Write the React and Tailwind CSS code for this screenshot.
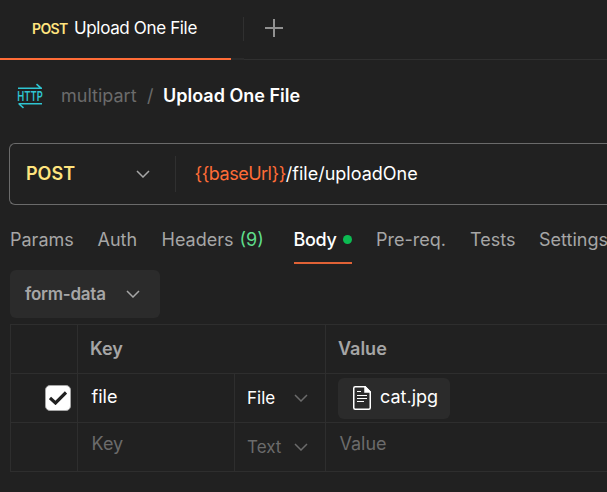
import React from "react";

function Chevron({ className }) {
  return (
    <svg className={className} width="14" height="8" viewBox="0 0 14 8" fill="none" stroke="currentColor" strokeWidth="1.5">
      <path d="M1 1 L7 7 L13 1" />
    </svg>
  );
}

function HttpIcon() {
  return (
    <svg className="overflow-visible" width="26" height="26" viewBox="0 0 26 26" fill="none" stroke="#2fc5d2" strokeWidth="1.6">
      <path d="M1 5.300 H25 M19.500 1.200 L24 5.200" />
      <path d="M25 20.700 H1.500 M6.500 24.800 L2 21" />
      <text x="0.300" y="18" fill="#2fc5d2" stroke="none" fontSize="13.500" fontWeight="600" textLength="25.400" lengthAdjust="spacingAndGlyphs">
        HTTP
      </text>
    </svg>
  );
}

function FileIcon() {
  return (
    <svg className="shrink-0" width="18" height="24" viewBox="0 0 18 24" fill="none" stroke="#fff" strokeWidth="1.5">
      <path d="M12 0.750 H2.200 Q0.750 0.750 0.750 2.200 V21.800 Q0.750 23.250 2.200 23.250 H15.800 Q17.250 23.250 17.250 21.800 V6 Z" />
      <path d="M12 0.700 V6 H17.300 Z" fill="#fff" />
      <path d="M4 5.500 H8 M4 9.500 H14 M4 12.500 H14 M4 15.500 H11" strokeWidth="1.2" />
    </svg>
  );
}

function Tab({ children, className }) {
  return <div className={`h-12 shrink-0 pt-[11px] leading-[26px] ${className}`}>{children}</div>;
}

export default function App() {
  return (
    <div className="h-[492px] w-[607px] overflow-hidden whitespace-nowrap bg-[#212121] font-['Inter',sans-serif] text-[18px] text-[#a6a6a6]">
      <header className="flex h-[60px]">
        <div className="flex h-[60px] w-[231px] items-center border-b-2 border-[#ff6c37] pl-8">
          <span className="w-[42px] pb-px text-[14px] font-semibold tracking-[-0.6px] text-[#ffe47e]">POST</span>
          <span className="text-[17px] tracking-[-0.35px] text-white">Upload One File</span>
        </div>
        <div className="flex w-[13px] items-center justify-end border-b-2 border-[#2b2b2b]">
          <span className="h-6 w-px bg-[#303030]" />
        </div>
        <div className="flex flex-1 items-center border-b border-[#303030] pl-[21px] pb-[3px]">
          <svg width="18" height="18" viewBox="0 0 18 18" stroke="#919191" strokeWidth="2">
            <path d="M9 0 V18 M0 9 H18" />
          </svg>
        </div>
      </header>

      <div className="flex h-[83px] items-center pb-[11px] pl-[17px]">
        <HttpIcon />
        <span className="ml-[18px] w-[86px] pb-0.5 text-[#6b6b6b]">multipart</span>
        <span className="w-4 pb-0.5 text-[#6b6b6b]">/</span>
        <span className="pb-0.5 font-semibold text-white">Upload One File</span>
      </div>

      <div className="ml-[9px] flex h-[62px] items-center rounded-l-md border border-r-0 border-[#6b6b6b]">
        <span className="w-[110px] pb-0.5 pl-4 font-semibold text-[#ffe47e]">POST</span>
        <Chevron className="ml-4" />
        <span className="ml-[25px] h-9 w-px bg-[#303030]" />
        <span className="ml-[18.500px] pb-0.5 text-white">
          <span className="tracking-[-0.5px] text-[#ff6c37]">{"{{baseUrl}}"}</span>/file/uploadOne
        </span>
      </div>

      <nav className="flex h-[65px] pt-[11px] pl-[10px]">
        <Tab className="w-[87.5px]">Params</Tab>
        <Tab className="w-16">Auth</Tab>
        <Tab className="w-[132px]">
          Headers <span className="ml-px text-[#5fdd8b]">(9)</span>
        </Tab>
        <Tab className="mr-6 flex w-[58.500px] border-b-2 border-[#e06236] text-white">
          <span className="w-[49px] shrink-0 font-medium tracking-[-0.3px]">Body</span>
          <span className="mt-2 h-[9px] w-[9px] shrink-0 rounded-full bg-[#0cbb52]" />
        </Tab>
        <Tab className="w-[94px]">Pre-req.</Tab>
        <Tab className="w-[69px]">Tests</Tab>
        <Tab className="w-20">Settings</Tab>
      </nav>

      <button className="mb-1.5 ml-[10px] flex h-12 w-[150px] items-center justify-between rounded-md bg-[#2b2b2b] pr-5 pl-[15px] text-[17px] font-semibold">
        <span className="pt-px tracking-[-0.25px]">form-data</span>
        <Chevron />
      </button>

      <div className="ml-[10px] grid grid-cols-[67px_157px_91px_1fr] grid-rows-[49px_49px_49px] border-t border-l border-[#2e2e2e] *:border-b *:border-[#2e2e2e]">
        <div className="border-r" />
        <div className="col-span-2 flex items-center border-r pb-0.5 pl-3 font-semibold">Key</div>
        <div className="flex items-center pb-0.5 pl-3 font-semibold">Value</div>

        <div className="flex items-center justify-end border-r pr-1.5">
          <span className="flex h-[26px] w-[26px] items-center justify-center rounded-[5px] border border-[#a6a6a6] bg-white">
            <svg width="18" height="14" viewBox="0 0 18 14" fill="none" stroke="#212121" strokeWidth="3.200">
              <path d="M1 7 L6.500 12 L17 1.500" />
            </svg>
          </span>
        </div>
        <div className="flex items-center border-r pb-1 pl-[13.500px] text-white">file</div>
        <div className="flex items-center border-r pl-3 text-[17px] text-white">
          <span className="w-[47px] pt-0.5">File</span>
          <Chevron className="text-[#6b6b6b]" />
        </div>
        <div className="flex items-center pl-3">
          <span className="flex h-[41px] w-[112px] items-center rounded-md bg-[#2b2b2b] pl-[15px] text-white">
            <FileIcon />
            <span className="ml-[9px] pb-1">cat.jpg</span>
          </span>
        </div>

        <div className="border-r" />
        <div className="flex items-center border-r pb-2 pl-[13.500px] text-[#6b6b6b]">Key</div>
        <div className="flex items-center border-r pl-3 text-[17px] text-[#6b6b6b]">
          <span className="w-[47px] pt-0.5">Text</span>
          <Chevron />
        </div>
        <div className="flex items-center pb-2 pl-[13.500px] text-[#6b6b6b]">Value</div>
      </div>
    </div>
  );
}
